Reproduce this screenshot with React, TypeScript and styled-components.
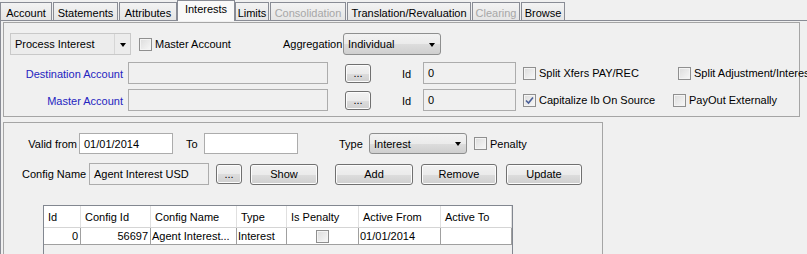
import React from "react";
import styled, { createGlobalStyle, css } from "styled-components";

const GlobalStyle = createGlobalStyle`
  html, body { margin: 0; padding: 0; background: #f0f0f0; overflow: hidden; }
  body { font-family: "Liberation Sans", Arial, sans-serif; font-size: 11px; color: #000; }
  * { box-sizing: border-box; }
`;

const Window = styled.div`
  width: 807px;
  height: 254px;
  overflow: hidden;
  background: #f0f0f0;
`;

const TabBar = styled.div`
  display: flex;
  align-items: flex-end;
  height: 20px;
  gap: 1px;
  padding-left: 0;
  position: relative;
  z-index: 1;
`;

const Tab = styled.div<{ $w: number; $selected?: boolean; $disabled?: boolean }>`
  width: ${(p) => p.$w}px;
  height: 18px;
  border: 1px solid #898c95;
  border-bottom: none;
  background: linear-gradient(#f3f3f3, #e5e5e5);
  color: ${(p) => (p.$disabled ? "#a7a7a7" : "#000")};
  display: flex;
  align-items: center;
  justify-content: center;
  padding-top: 2px;
  white-space: nowrap;
  ${(p) =>
    p.$selected &&
    css`
      height: 21px;
      margin-bottom: -1px;
      margin-left: -1px;
      margin-right: -1px;
      background: #f9f9f9;
      padding-top: 0;
      padding-bottom: 4px;
    `}
`;

const TabPane = styled.div`
  border-top: 1px solid #898c95;
  border-left: 1px solid #898c95;
  padding: 1px 0 0 2px;
  height: 234px;
`;

const Panel = styled.div<{ $w: number; $h: number; $mt?: number }>`
  width: ${(p) => p.$w}px;
  height: ${(p) => p.$h}px;
  margin-top: ${(p) => p.$mt ?? 0}px;
  border: 1px solid #a5a5a5;
  display: flex;
  flex-direction: column;
`;

const Row = styled.div<{ $h?: number; $mt: number }>`
  display: flex;
  align-items: center;
  height: ${(p) => p.$h ?? 22}px;
  margin-top: ${(p) => p.$mt}px;
  white-space: nowrap;
`;

const Label = styled.span<{ $w?: number; $ml?: number; $right?: boolean; $blue?: boolean; $dy?: number }>`
  display: inline-block;
  ${(p) => (p.$w ? `width: ${p.$w}px;` : "")}
  margin-left: ${(p) => p.$ml ?? 0}px;
  padding-top: ${(p) => p.$dy ?? 0}px;
  text-align: ${(p) => (p.$right ? "right" : "left")};
  color: ${(p) => (p.$blue ? "#2424c0" : "#000")};
  flex-shrink: 0;
`;

const Field = styled.div<{ $w: number; $ml?: number; $white?: boolean; $h?: number }>`
  width: ${(p) => p.$w}px;
  height: ${(p) => p.$h ?? 22}px;
  margin-left: ${(p) => p.$ml ?? 0}px;
  border: 1px solid #acacac;
  background: ${(p) => (p.$white ? "#ffffff" : "#f0f0f0")};
  padding-left: 4px;
  display: flex;
  align-items: center;
  flex-shrink: 0;
`;

const Combo = styled.div<{ $w: number; $ml?: number; $flat?: boolean; $h?: number }>`
  width: ${(p) => p.$w}px;
  height: ${(p) => p.$h ?? 22}px;
  margin-left: ${(p) => p.$ml ?? 0}px;
  border: 1px solid ${(p) => (p.$flat ? "#c9c9c9" : "#8e8f8f")};
  border-radius: ${(p) => (p.$flat ? 0 : 3)}px;
  background: ${(p) => (p.$flat ? "#ececec" : "linear-gradient(#f2f2f2 0%, #ebebeb 50%, #dddddd 51%, #cfcfcf 100%)")};
  display: flex;
  align-items: center;
  flex-shrink: 0;
`;

const ComboText = styled.span`
  flex: 1;
  padding-left: 4px;
`;

const ComboArrow = styled.span<{ $divider?: boolean }>`
  width: 16px;
  height: 100%;
  display: flex;
  align-items: center;
  justify-content: center;
  ${(p) => p.$divider && "border-left: 1px solid #d6d6d6;"}
  &::after {
    content: "";
    border-left: 3px solid transparent;
    border-right: 3px solid transparent;
    border-top: 4px solid #000;
    margin-top: 1px;
  }
`;

const Button = styled.div<{ $w: number; $ml?: number; $h?: number }>`
  width: ${(p) => p.$w}px;
  height: ${(p) => p.$h ?? 21}px;
  margin-left: ${(p) => p.$ml ?? 0}px;
  border: 1px solid #707070;
  border-radius: 3px;
  background: linear-gradient(#f2f2f2 0%, #ebebeb 50%, #dddddd 51%, #cfcfcf 100%);
  box-shadow: inset 0 0 0 1px #fcfcfc;
  display: flex;
  align-items: center;
  justify-content: center;
  flex-shrink: 0;
`;

const Check = styled.span<{ $ml?: number }>`
  width: 13px;
  height: 13px;
  margin-left: ${(p) => p.$ml ?? 0}px;
  border: 1px solid #8f8f8f;
  background: linear-gradient(135deg, #dcdcdc, #f8f8f8);
  box-shadow: inset 0 0 0 1px #f4f4f4;
  flex-shrink: 0;
  display: inline-flex;
  align-items: center;
  justify-content: center;
`;

const CheckBox = ({ ml, checked }: { ml?: number; checked?: boolean }) => (
  <Check $ml={ml}>
    {checked && (
      <svg width="9" height="9" viewBox="0 0 9 9">
        <path d="M1 4.5 L3.5 7 L8 1.5" fill="none" stroke="#4a5f97" strokeWidth="1.6" />
      </svg>
    )}
  </Check>
);

const Table = styled.div`
  margin-left: 39px;
  margin-top: 20px;
  width: 470px;
  flex: 1;
  border: 1px solid #828790;
  border-bottom: none;
  background: #f0f0f0;
`;

const TRow = styled.div<{ $header?: boolean }>`
  display: grid;
  grid-template-columns: 37px 70px 86px 50px 72px 82px 71px;
  height: ${(p) => (p.$header ? 22 : 17)}px;
  background: #fff;
  ${(p) => (p.$header ? "border-bottom: 1px solid #d5d5d5;" : "border-bottom: 1px solid #a0a0a0;")}
`;

const HCell = styled.div`
  border-right: 1px solid #e0e0e0;
  padding-left: 4px;
  display: flex;
  align-items: center;
  white-space: nowrap;
  overflow: hidden;
`;

const Cell = styled.div<{ $align?: "left" | "right" | "center" }>`
  border-right: 1px solid #a0a0a0;
  padding: 0 2px 0 1px;
  display: flex;
  align-items: center;
  justify-content: ${(p) => (p.$align === "right" ? "flex-end" : p.$align === "center" ? "center" : "flex-start")};
  white-space: nowrap;
  overflow: hidden;
`;

const tabs = [
  { t: "Account", w: 52 },
  { t: "Statements", w: 65 },
  { t: "Attributes", w: 58 },
  { t: "Interests", w: 58, sel: true },
  { t: "Limits", w: 34 },
  { t: "Consolidation", w: 76, dis: true },
  { t: "Translation/Revaluation", w: 124 },
  { t: "Clearing", w: 48, dis: true },
  { t: "Browse", w: 44 },
];

export default function App() {
  return (
    <Window>
      <GlobalStyle />
      <TabBar>
        {tabs.map((t) => (
          <Tab key={t.t} $w={t.w} $selected={t.sel} $disabled={t.dis}>
            {t.t}
          </Tab>
        ))}
      </TabBar>
      <TabPane>
        <Panel $w={797} $h={95}>
          <Row $mt={10}>
            <Combo $w={121} $ml={6} $flat>
              <ComboText>Process Interest</ComboText>
              <ComboArrow $divider />
            </Combo>
            <CheckBox ml={8} />
            <Label $ml={3} $w={126}>Master Account</Label>
            <Label $ml={2} $w={58}>Aggregation</Label>
            <Combo $w={98} $ml={2}>
              <ComboText>Individual</ComboText>
              <ComboArrow />
            </Combo>
          </Row>
          <Row $mt={7}>
            <Label $w={119} $right $blue $dy={2}>Destination Account</Label>
            <Field $w={200} $ml={5} />
            <Button $w={26} $h={19} $ml={17}>...</Button>
            <Label $ml={31} $w={21} $dy={2}>Id</Label>
            <Field $w={93}>0</Field>
            <CheckBox ml={7} />
            <Label $ml={3} $w={139}>Split Xfers PAY/REC</Label>
            <CheckBox />
            <Label $ml={3}>Split Adjustment/Interest</Label>
          </Row>
          <Row $mt={5}>
            <Label $w={119} $right $blue $dy={1}>Master Account</Label>
            <Field $w={200} $ml={5} />
            <Button $w={26} $h={19} $ml={17}>...</Button>
            <Label $ml={31} $w={21} $dy={1}>Id</Label>
            <Field $w={93}>0</Field>
            <CheckBox ml={7} checked />
            <Label $ml={3} $w={134}>Capitalize Ib On Source</Label>
            <CheckBox />
            <Label $ml={3}>PayOut Externally</Label>
          </Row>
        </Panel>
        <Panel $w={600} $h={140} $mt={5}>
          <Row $h={21} $mt={10}>
            <Label $ml={23} $w={50} $right>Valid from</Label>
            <Field $w={94} $h={21} $ml={2} $white>01/01/2014</Field>
            <Label $ml={13} $w={18}>To</Label>
            <Field $w={94} $h={21} $white />
            <Label $ml={41} $w={30}>Type</Label>
            <Combo $w={98} $h={21}>
              <ComboText>Interest</ComboText>
              <ComboArrow />
            </Combo>
            <CheckBox ml={7} />
            <Label $ml={3}>Penalty</Label>
          </Row>
          <Row $mt={9}>
            <Label $ml={18} $w={67}>Config Name</Label>
            <Field $w={120} $ml={0}>Agent Interest USD</Field>
            <Button $w={26} $h={20} $ml={7}>...</Button>
            <Button $w={68} $ml={8}>Show</Button>
            <Button $w={78} $ml={17}>Add</Button>
            <Button $w={76} $ml={8}>Remove</Button>
            <Button $w={76} $ml={9}>Update</Button>
          </Row>
          <Table>
            <TRow $header>
              <HCell>Id</HCell>
              <HCell>Config Id</HCell>
              <HCell>Config Name</HCell>
              <HCell>Type</HCell>
              <HCell>Is Penalty</HCell>
              <HCell>Active From</HCell>
              <HCell>Active To</HCell>
            </TRow>
            <TRow>
              <Cell $align="right">0</Cell>
              <Cell $align="right">56697</Cell>
              <Cell>Agent Interest...</Cell>
              <Cell>Interest</Cell>
              <Cell $align="center"><CheckBox /></Cell>
              <Cell>01/01/2014</Cell>
              <Cell />
            </TRow>
          </Table>
        </Panel>
      </TabPane>
    </Window>
  );
}
